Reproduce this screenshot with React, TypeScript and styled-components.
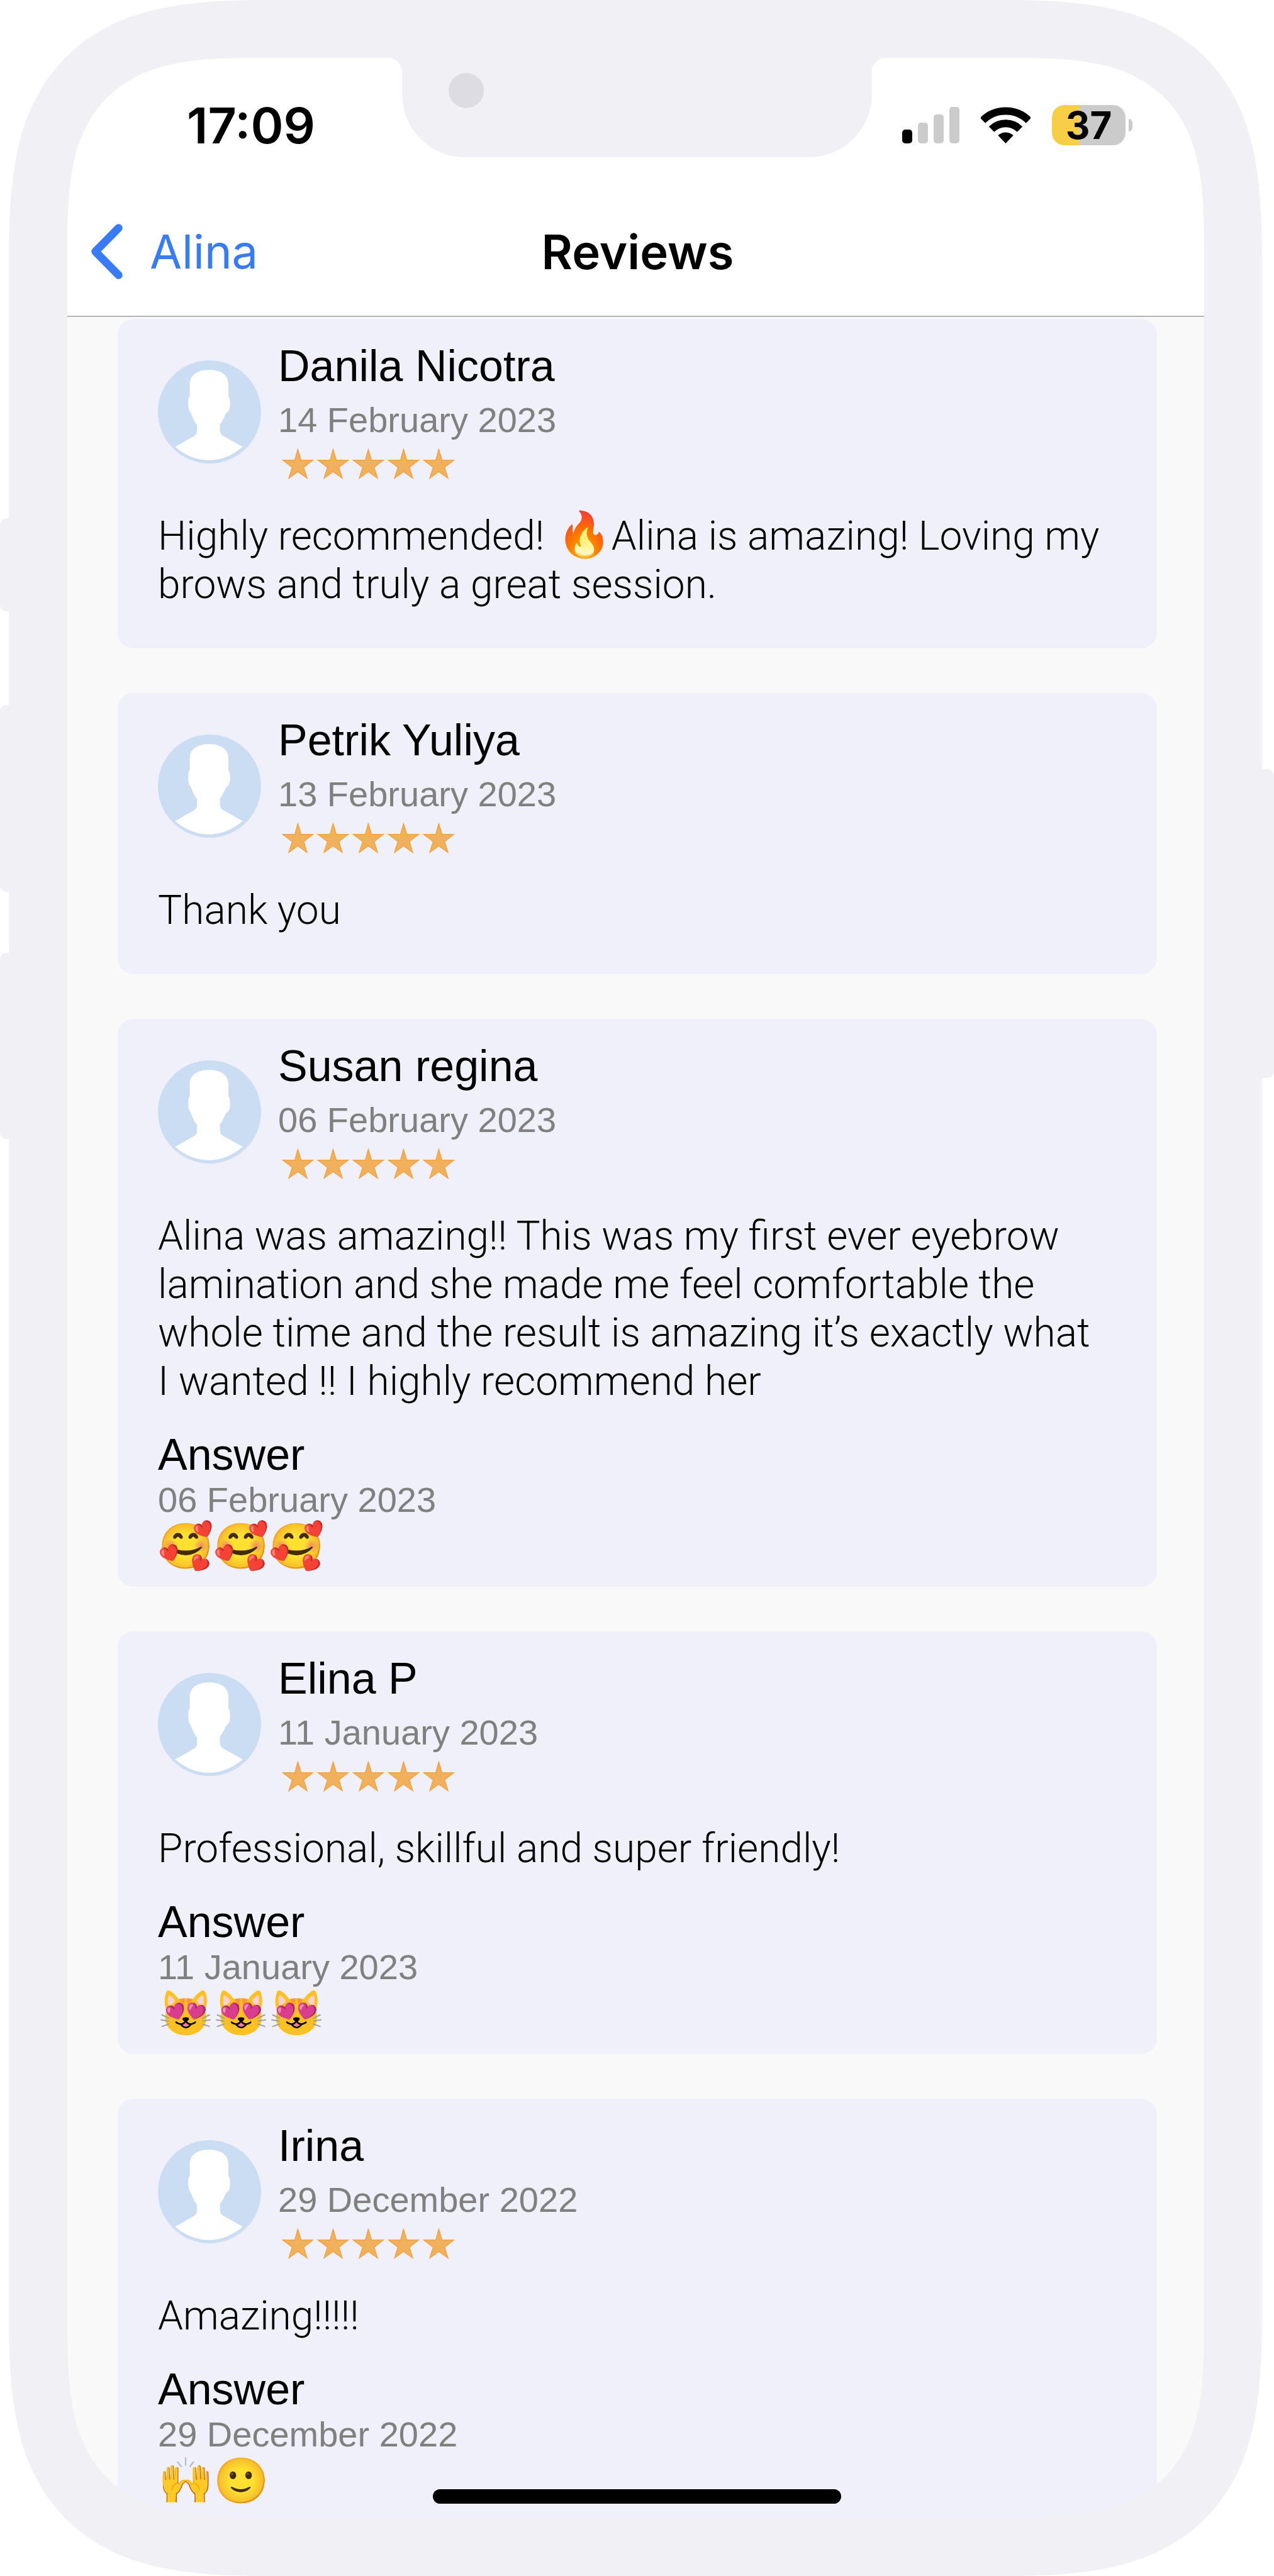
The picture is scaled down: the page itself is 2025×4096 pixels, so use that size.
import React from 'react';
import styled, { createGlobalStyle } from 'styled-components';

const color = {
  frame: '#f1f0f5',
  lens: '#dddce2',
  canvas: '#f9f9f9',
  card: '#f0f0fa',
  blue: '#377bf7',
  muted: '#808080',
  idle: '#cbcbcb',
  charge: '#f7ce46',
};

const ui = `Inter, "Liberation Sans", sans-serif`;
const text = `"Liberation Sans", Arial, sans-serif`;
const light = `Roboto, "Liberation Sans", sans-serif`;

const GlobalStyle = createGlobalStyle`
  *, *::before, *::after { box-sizing: border-box; }
  body { margin: 0; background: #ffffff; color: #000000; font-family: ${text}; }
  h1, h2, h3, p, ul { margin: 0; padding: 0; font-weight: 400; }
  ul { list-style: none; }
`;

const Page = styled.div`
  position: relative;
  display: flex;
  min-height: 100vh;
  padding: 0 19px 0 14px;
  overflow: hidden;
`;

const Device = styled.div`
  position: relative;
  display: flex;
  flex: 1;
  min-width: 0;
  padding: 92px 92px 93px 93px;
  background: ${color.frame};
  border-radius: 320px;

  @supports (corner-shape: superellipse(1.5)) {
    border-radius: 418px;
    corner-shape: superellipse(1.5);
  }
`;

const SideButton = styled.span<{ $side: 'left' | 'right'; $top: number; $length: number }>`
  position: absolute;
  ${(p) => p.$side}: 0;
  top: ${(p) => p.$top}px;
  width: 40px;
  height: ${(p) => p.$length}px;
  background: ${color.frame};
  border-radius: 10px;
`;

const Notch = styled.div`
  position: absolute;
  top: 0;
  right: 0;
  left: 0;
  width: 747px;
  height: 250px;
  margin: 0 auto;
  padding: 116px 0 0 74px;
  background: ${color.frame};
  border-radius: 0 0 100px 100px;

  &::before,
  &::after {
    content: '';
    position: absolute;
    top: 92px;
    width: 24px;
    height: 24px;
  }
  &::before {
    right: 100%;
    background: radial-gradient(circle at 0 100%, transparent 24px, ${color.frame} 25px);
  }
  &::after {
    left: 100%;
    background: radial-gradient(circle at 100% 100%, transparent 24px, ${color.frame} 25px);
  }
`;

const Lens = styled.div`
  width: 56px;
  height: 56px;
  border-radius: 50%;
  background: ${color.lens};
`;

const HomeIndicator = styled.div`
  position: absolute;
  right: 0;
  bottom: 115px;
  left: 0;
  width: 649px;
  height: 23px;
  margin: 0 auto;
  border-radius: 12px;
  background: #000000;
`;

const Screen = styled.div`
  display: flex;
  flex: 1;
  flex-direction: column;
  min-width: 0;
  overflow: hidden;
  background: ${color.canvas};
  border-radius: 230px;

  @supports (corner-shape: superellipse(1.6)) {
    border-radius: 310px;
    corner-shape: superellipse(1.6);
  }
`;

const StatusBar = styled.div`
  display: flex;
  align-items: center;
  justify-content: space-between;
  min-height: 206px;
  padding: 8px 114px 0 190px;
  background: #ffffff;
`;

const Clock = styled.time`
  font: 600 79px/92px ${ui};
`;

const StatusIcons = styled.div`
  display: flex;
  align-items: center;
  gap: 34px;
`;

const Signal = styled.div`
  display: flex;
  align-items: flex-end;
  gap: 9px;
`;

const Bar = styled.span<{ $height: number; $active?: boolean }>`
  width: 16px;
  height: ${(p) => p.$height}px;
  border-radius: 5px;
  background: ${(p) => (p.$active ? '#000000' : color.idle)};
`;

const Battery = styled.div`
  display: flex;
  align-items: center;
  gap: 5px;
`;

const BatteryBody = styled.div`
  width: 117px;
  border-radius: 20px;
  background: linear-gradient(to right, ${color.charge} 38%, ${color.idle} 38%);
  font: 700 60px/64px ${ui};
  text-align: center;
`;

const BatteryTip = styled.span`
  width: 6px;
  height: 20px;
  border-radius: 0 6px 6px 0;
  background: ${color.idle};
`;

const NavBar = styled.header`
  display: grid;
  grid-template-columns: 1fr auto 1fr;
  align-items: center;
  min-height: 206px;
  padding: 0 30px 0 36px;
  border-bottom: 2px solid #b5b5b5;
  background: #ffffff;
`;

const BackButton = styled.button`
  display: flex;
  align-items: center;
  justify-self: start;
  gap: 43px;
  padding: 0;
  border: 0;
  background: none;
  color: ${color.blue};
  font: 400 74px/92px ${ui};
  cursor: pointer;
`;

const Title = styled.h1`
  font: 600 76px/92px ${ui};
`;

const ReviewList = styled.ul`
  display: flex;
  flex: 1;
  flex-direction: column;
  gap: 71px;
  padding: 3px 75px 0 80px;
`;

const Author = styled.div`
  display: flex;
  align-items: center;
  gap: 27px;
  margin-bottom: 47px;
`;

const AuthorText = styled.div`
  display: flex;
  flex-direction: column;
`;

const Name = styled.h2`
  font-size: 70px;
  line-height: 80px;
`;

const Posted = styled.time`
  display: block;
  color: ${color.muted};
  font-size: 56px;
  line-height: 64px;
`;

const AuthorDate = styled(Posted)`
  margin-top: 14px;
`;

const Stars = styled.div`
  display: flex;
  align-items: flex-start;
  gap: 5px;
  height: 54px;
  margin-top: 13px;
  padding-left: 6px;
`;

const Body = styled.p`
  padding-bottom: 63px;
  font: 300 64px/77px ${light};
`;

const AnsweredBody = styled(Body)`
  padding-bottom: 38px;
`;

const Emoji = styled.span`
  margin-left: 4px;
  font-size: 70px;
  line-height: 0;
`;

const Answer = styled.section`
  padding-bottom: 22px;
`;

const AnswerTitle = styled.h3`
  font-size: 70px;
  line-height: 80px;
`;

const AnswerBody = styled.p`
  font-size: 71px;
  line-height: 84px;
`;

const Card = styled.li`
  padding: 35px 80px 0 64px;
  background: ${color.card};
  border-radius: 25px;

  &:last-child {
    flex: 1;
    border-radius: 25px 25px 0 0;
  }
  &:last-child ${Answer} {
    padding-bottom: 0;
  }
`;

function ChevronLeft() {
  return (
    <svg width="52" height="88" viewBox="0 0 52 88" fill="none" aria-hidden="true">
      <path d="M45.5 6.5 8.5 44l37 37.5" stroke="currentColor" strokeWidth="12.5" strokeLinecap="round" strokeLinejoin="round" />
    </svg>
  );
}

function Wifi() {
  return (
    <svg width="79" height="58" viewBox="0 0 79 58" fill="none" role="img" aria-label="Wi-Fi">
      <path d="M3 21.5a52 52 0 0 1 73 0" stroke="#000" strokeWidth="12" />
      <path d="M17 35.5a32 32 0 0 1 45 0" stroke="#000" strokeWidth="12" />
      <path d="M39.5 58 27.3 45.3a18 18 0 0 1 24.4 0z" fill="#000" />
    </svg>
  );
}

function Avatar() {
  return (
    <svg width="164" height="164" viewBox="47 70 634 634" aria-hidden="true">
      <circle cx="364" cy="387" r="317" fill="#cbddf2" />
      <path
        fill="#fff"
        d="M153 602 268 536Q287 526 287 505V465Q276 458 262 425L246 386Q237 382 234 350Q230 300 243 288V215C243 160 290 129 362 129C434 129 480 160 480 215V288Q492 300 490 345Q488 378 476 386Q466 390 456 415Q440 450 428 462V500Q430 524 447 534L568 602C505 657 430 684 362 684C290 684 215 657 153 602Z"
      />
    </svg>
  );
}

function Star() {
  return (
    <svg width="51" height="49" viewBox="0 0 197 188" aria-hidden="true">
      <path
        d="M98 6 118 72H190L134 116 154 182 98 142 43 182 64 116 7 72H80Z"
        fill="#f1b05c"
        stroke="#f3a442"
        strokeWidth="6"
      />
    </svg>
  );
}

type Review = {
  name: string;
  date: string;
  body: React.ReactNode;
  answer?: string;
};

const reviews: Review[] = [
  {
    name: 'Danila Nicotra',
    date: '14 February 2023',
    body: (
      <>
        Highly recommended! <Emoji>🔥</Emoji>Alina is amazing! Loving my
        <br />
        brows and truly a great session.
      </>
    ),
  },
  { name: 'Petrik Yuliya', date: '13 February 2023', body: 'Thank you' },
  {
    name: 'Susan regina',
    date: '06 February 2023',
    body: 'Alina was amazing!! This was my first ever eyebrow lamination and she made me feel comfortable the whole time and the result is amazing it’s exactly what I wanted !! I highly recommend her',
    answer: '🥰🥰🥰',
  },
  {
    name: 'Elina P',
    date: '11 January 2023',
    body: 'Professional, skillful and super friendly!',
    answer: '😻😻😻',
  },
  { name: 'Irina', date: '29 December 2022', body: 'Amazing!!!!!', answer: '🙌🙂' },
];

function ReviewCard({ name, date, body, answer }: Review) {
  return (
    <Card>
      <Author>
        <Avatar />
        <AuthorText>
          <Name>{name}</Name>
          <AuthorDate>{date}</AuthorDate>
          <Stars role="img" aria-label="5 out of 5 stars">
            {[1, 2, 3, 4, 5].map((n) => (
              <Star key={n} />
            ))}
          </Stars>
        </AuthorText>
      </Author>
      {answer ? <AnsweredBody>{body}</AnsweredBody> : <Body>{body}</Body>}
      {answer && (
        <Answer>
          <AnswerTitle>Answer</AnswerTitle>
          <Posted>{date}</Posted>
          <AnswerBody>{answer}</AnswerBody>
        </Answer>
      )}
    </Card>
  );
}

export default function App() {
  return (
    <Page>
      <GlobalStyle />
      <SideButton $side="left" $top={824} $length={148} />
      <SideButton $side="left" $top={1121} $length={297} />
      <SideButton $side="left" $top={1515} $length={296} />
      <SideButton $side="right" $top={1223} $length={491} />
      <Device>
        <Screen>
          <StatusBar>
            <Clock>17:09</Clock>
            <StatusIcons>
              <Signal role="img" aria-label="Signal: one bar">
                <Bar $height={22} $active />
                <Bar $height={33} />
                <Bar $height={46} />
                <Bar $height={58} />
              </Signal>
              <Wifi />
              <Battery>
                <BatteryBody>37</BatteryBody>
                <BatteryTip />
              </Battery>
            </StatusIcons>
          </StatusBar>
          <NavBar>
            <BackButton type="button">
              <ChevronLeft />
              Alina
            </BackButton>
            <Title>Reviews</Title>
          </NavBar>
          <ReviewList>
            {reviews.map((review) => (
              <ReviewCard key={review.name} {...review} />
            ))}
          </ReviewList>
        </Screen>
      </Device>
      <Notch>
        <Lens />
      </Notch>
      <HomeIndicator />
    </Page>
  );
}
